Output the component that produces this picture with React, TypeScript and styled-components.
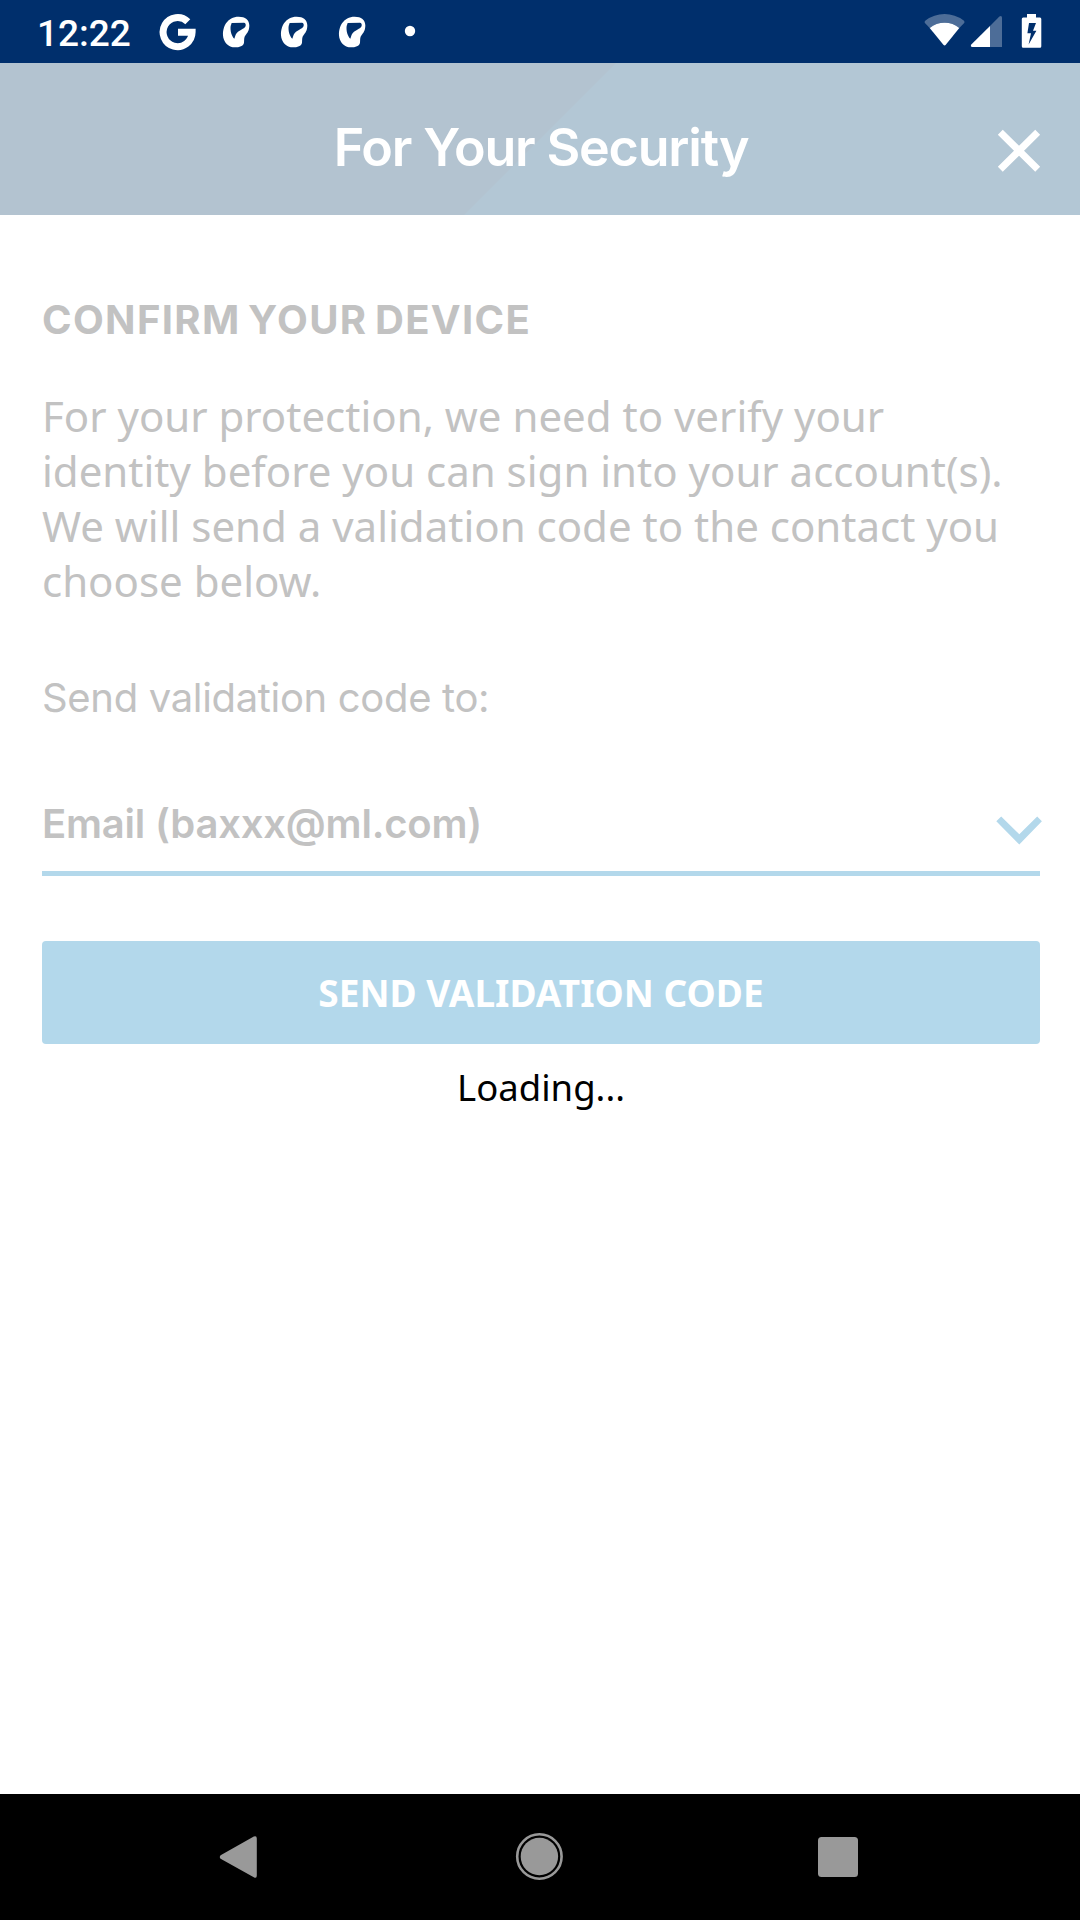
import React from "react";
import styled, { createGlobalStyle } from "styled-components";

const colors = {
  navy: "#002f6c",
  headerLeft: "#b3c3d0",
  headerRight: "#b3c7d5",
  accent: "#b3d8eb",
  muted: "#c2c2c2",
  nav: "#999999",
};

const brand = `Inter, sans-serif`;
const body = `"Noto Sans", sans-serif`;

const GlobalStyle = createGlobalStyle`
  * { box-sizing: border-box; }
  body { margin: 0; background: #fff; }
  svg { display: block; flex: none; }
`;

const Screen = styled.div`
  width: 1080px;
  height: 1920px;
  display: flex;
  flex-direction: column;
  background: #ffffff;
  overflow: hidden;
`;

const StatusBar = styled.div`
  height: 63px;
  flex: none;
  display: flex;
  justify-content: space-between;
  background: ${colors.navy};
`;

const StatusGroup = styled.div<{ $start?: number; $end?: number }>`
  display: flex;
  align-items: flex-start;
  padding-left: ${(p) => p.$start ?? 0}px;
  padding-right: ${(p) => p.$end ?? 0}px;
`;

const Clock = styled.span`
  width: 122px;
  padding-top: 12px;
  font: 500 37px/44px Roboto, sans-serif;
  color: #ffffff;
`;

const Header = styled.header`
  height: 152px;
  flex: none;
  display: grid;
  grid-template-columns: 84px 1fr 84px;
  background: linear-gradient(
      to bottom right,
      ${colors.headerLeft} 49.7%,
      ${colors.headerRight} 50.3%
    )
    464px 0 / 152px 152px no-repeat,
    linear-gradient(to right, ${colors.headerLeft} 0 540px, ${colors.headerRight} 540px);
`;

const Title = styled.h1`
  margin: 0;
  padding: 53px 0 0 2px;
  font: 600 52px/63px ${brand};
  letter-spacing: -1.2px;
  text-align: center;
  color: #ffffff;
`;

const IconButton = styled.button`
  padding: 66px 0 0 1px;
  border: 0;
  background: none;
  display: flex;
  align-items: flex-start;
`;

const Content = styled.main`
  flex: 1;
  display: flex;
  flex-direction: column;
  padding: 80px 40px 0 42px;
  color: ${colors.muted};
`;

const SectionTitle = styled.h2`
  margin: 0;
  font: 700 40px/49px ${brand};
  letter-spacing: 1.35px;
  word-spacing: -3.3px;
`;

const Copy = styled.p`
  margin: 44px 0 0;
  font: 400 42px/55px ${body};
`;

const Label = styled.div`
  margin-top: 65px;
  font: 400 40px/49px ${brand};
  letter-spacing: -0.33px;
`;

const Select = styled.div`
  margin-top: 77px;
  height: 77px;
  display: flex;
  justify-content: space-between;
  border-bottom: 5px solid ${colors.accent};
`;

const SelectValue = styled.span`
  font: 600 40px/49px ${brand};
  letter-spacing: -0.2px;
`;

const Chevron = styled.svg`
  margin: 16px -4px 0 0;
`;

const Submit = styled.button`
  margin-top: 65px;
  height: 103px;
  flex: none;
  padding: 0;
  border: 0;
  border-radius: 4px;
  background: ${colors.accent};
  color: #ffffff;
  font: 700 37px/51px ${body};
`;

const Loading = styled.div`
  margin-top: 18px;
  font: 400 36.5px/50px ${body};
  text-align: center;
  color: #000000;
`;

const NavBar = styled.nav`
  height: 126px;
  flex: none;
  display: flex;
  align-items: center;
  justify-content: space-between;
  padding: 0 220px 0 218px;
  background: #000000;
`;

const LeftIcons = () => (
  <svg width="262" height="63" viewBox="159 0 262 63" fill="#fff">
    <path
      d="M187.8 21.8A14.5 14.5 0 1 0 192.1 32.3H178"
      fill="none"
      stroke="#fff"
      strokeWidth="7"
    />
    {[0, 58, 116].map((dx) => (
      <g key={dx} transform={`translate(${200 + dx} 10) scale(.3333)`}>
        <path
          fillRule="evenodd"
          d="M116 20C136 20 148 30 148 46C148 62 142 69 137 75C131 82 133 90 132 98C130 108 119 112 104 112C88 111 77 102 72 89C66 74 69 54 78 40C87 27 99 20 116 20Z M95 39L132 38C136 39 138 42 137 47C135 55 124 58 114 65C107 70 106 78 103 86C95 79 90 62 92 48Z"
        />
      </g>
    ))}
    <circle cx="410" cy="31" r="5.2" />
  </svg>
);

const RightIcons = () => (
  <svg width="120" height="63" viewBox="922 0 120 63" fill="#fff">
    <path
      opacity=".3"
      d="M924.7 22.8Q924.3 21.5 925.5 20.5Q934 14 944.6 14Q955 14 963.7 20.5Q964.8 21.5 964.4 22.8L959.3 28Q953 22.7 944.6 22.7Q936 22.7 929.7 28Z"
    />
    <path d="M929.7 28Q936 22.7 944.6 22.7Q953 22.7 959.3 28L945.8 44.8Q944.6 46.2 943.4 44.8Z" />
    <path opacity=".3" d="M990 26L999.4 16.5Q1002 15 1002 18V47H990Z" />
    <path d="M990 26V47H972.3Q970 47 971.3 44.6Z" />
    <path
      fillRule="evenodd"
      d="M1027 14H1036V17.5H1040Q1041.3 17.5 1041.3 19V46.3Q1041.3 47.8 1040 47.8H1023.2Q1021.8 47.8 1021.8 46.3V19Q1021.8 17.5 1023.2 17.5H1027Z M1029 23L1027.4 33.3H1031L1028.6 44.6L1036.4 30.7H1033L1036 23Z"
    />
  </svg>
);

export default function App() {
  return (
    <Screen>
      <GlobalStyle />
      <StatusBar>
        <StatusGroup $start={37}>
          <Clock>12:22</Clock>
          <LeftIcons />
        </StatusGroup>
        <StatusGroup $end={38}>
          <RightIcons />
        </StatusGroup>
      </StatusBar>
      <Header>
        <span />
        <Title>For Your Security</Title>
        <IconButton aria-label="Close">
          <svg width="44" height="44" viewBox="997 129 44 44">
            <path
              d="M1000.3 132.3L1037.7 169.2M1037.7 132.3L1000.3 169.2"
              stroke="#fff"
              strokeWidth="7"
            />
          </svg>
        </IconButton>
      </Header>
      <Content>
        <SectionTitle>CONFIRM YOUR DEVICE</SectionTitle>
        <Copy>
          For your protection, we need to verify your identity before you can sign into your
          account(s). We will send a validation code to the contact you choose below.
        </Copy>
        <Label>Send validation code to:</Label>
        <Select>
          <SelectValue>Email (baxxx@ml.com)</SelectValue>
          <Chevron width="50" height="32" viewBox="994 815 50 32">
            <path
              fill={colors.accent}
              d="M996.3 821.3L1001.2 816.4L1019.3 834.3L1037.2 816.4L1041.9 821.3L1019.3 844.5Z"
            />
          </Chevron>
        </Select>
        <Submit>SEND VALIDATION CODE</Submit>
        <Loading>Loading...</Loading>
      </Content>
      <NavBar>
        <svg width="42" height="46" viewBox="218 1834 42 46">
          <path
            fill={colors.nav}
            d="M220.6 1855.2L253.8 1836.6Q256.8 1835.4 256.8 1838.6V1875.6Q256.8 1879 253.8 1877.3L220.6 1858.8Q219 1857 220.6 1855.2Z"
          />
        </svg>
        <svg width="48" height="48" viewBox="0 0 48 48" fill={colors.nav}>
          <circle cx="24.4" cy="23.5" r="18.7" />
          <circle cx="24.4" cy="23.5" r="22.2" fill="none" stroke={colors.nav} strokeWidth="2.6" />
        </svg>
        <svg width="42" height="42" viewBox="0 0 42 42">
          <rect x="0" y="1" width="40" height="40" rx="3.5" fill={colors.nav} />
        </svg>
      </NavBar>
    </Screen>
  );
}
